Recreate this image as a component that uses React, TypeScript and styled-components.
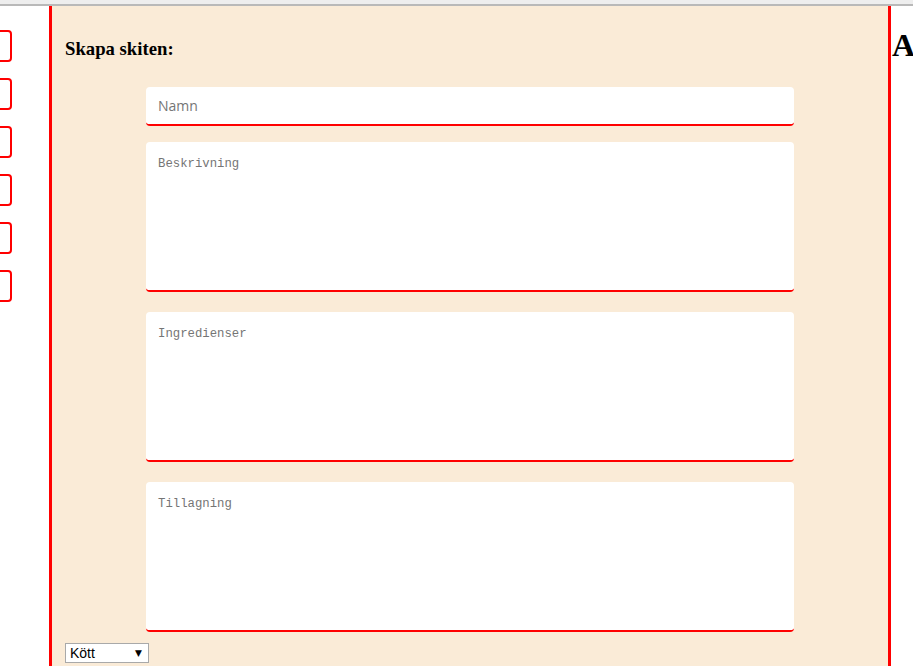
import styled, { createGlobalStyle } from 'styled-components';

const Global = createGlobalStyle`
  html, body {
    margin: 0;
    padding: 0;
    background: #fff;
    overflow: hidden;
  }
  body {
    font-family: "Liberation Serif", "Times New Roman", serif;
  }
`;

const TopStrip = styled.div`
  height: 4px;
  background: #eeeeee;
  border-bottom: 2px solid #b9b9b9;
`;

const Page = styled.div`
  display: flex;
  width: 913px;
  height: 660px;
  overflow: hidden;
`;

const Sidebar = styled.nav`
  flex: 0 0 49px;
  display: flex;
  flex-direction: column;
  gap: 16px;
  padding-top: 24px;
  overflow: hidden;
`;

const SideTile = styled.div`
  width: 58px;
  height: 28px;
  margin-left: -50px;
  border: 2px solid #ff0000;
  border-radius: 4px;
  background: #fff;
`;

const Panel = styled.main`
  flex: 0 0 842px;
  border-left: 3px solid #ff0000;
  border-right: 3px solid #ff0000;
  background: #faebd7;
  padding: 0 13px;
  box-sizing: border-box;
`;

const Title = styled.h3`
  margin: 32px 0 0;
  font-size: 18.72px;
  font-weight: bold;
  color: #000;
`;

const Form = styled.form`
  display: flex;
  flex-direction: column;
  margin-top: 27px;
`;

const Fields = styled.div`
  display: flex;
  flex-direction: column;
  align-items: center;
  gap: 20px;
`;

const fieldBase = `
  width: 648px;
  box-sizing: border-box;
  border: none;
  border-bottom: 2px solid #ff0000;
  border-radius: 4px;
  background: #fff;
  outline: none;
  margin: 0;
  &::placeholder {
    color: #757575;
    opacity: 1;
  }
`;

const NameInput = styled.input`
  ${fieldBase}
  height: 39px;
  padding: 0 12px;
  font-family: "Open Sans", "Liberation Sans", Arial, sans-serif;
  font-size: 14px;
  margin-bottom: -4px;
`;

const TextBox = styled.textarea`
  ${fieldBase}
  height: 150px;
  padding: 14px 12px 12px;
  resize: none;
  font-family: "Liberation Mono", "DejaVu Sans Mono", monospace;
  font-size: 12.3px;
  line-height: 16px;
`;

const SelectWrap = styled.div`
  position: relative;
  width: 84px;
  height: 20px;
  margin-top: 11px;
`;

const CategorySelect = styled.select`
  appearance: none;
  -webkit-appearance: none;
  width: 84px;
  height: 20px;
  box-sizing: border-box;
  border: 1px solid #a9a9a9;
  border-radius: 0;
  background: #fff;
  padding: 0 16px 0 4px;
  font-family: "Liberation Sans", Arial, sans-serif;
  font-size: 14px;
  color: #000;
  outline: none;
`;

const Caret = styled.span`
  position: absolute;
  right: 7px;
  top: 4px;
  font-size: 9px;
  line-height: 12px;
  color: #000;
  pointer-events: none;
  font-family: "DejaVu Sans", sans-serif;
`;

const Aside = styled.aside`
  flex: 1 1 auto;
  overflow: hidden;
  white-space: nowrap;
`;

const AsideTitle = styled.h1`
  margin: 21px 0 0 1px;
  font-size: 32px;
  font-weight: bold;
  color: #000;
`;

export default function App() {
  return (
    <>
      <Global />
      <TopStrip />
      <Page>
        <Sidebar>
          {[0, 1, 2, 3, 4, 5].map((i) => (
            <SideTile key={i} />
          ))}
        </Sidebar>
        <Panel>
          <Title>Skapa skiten:</Title>
          <Form onSubmit={(e) => e.preventDefault()}>
            <Fields>
              <NameInput placeholder="Namn" />
              <TextBox placeholder="Beskrivning" />
              <TextBox placeholder="Ingredienser" />
              <TextBox placeholder="Tillagning" />
            </Fields>
            <SelectWrap>
              <CategorySelect defaultValue="Kött">
                <option>Kött</option>
                <option>Fisk</option>
                <option>Vegetariskt</option>
              </CategorySelect>
              <Caret>▼</Caret>
            </SelectWrap>
          </Form>
        </Panel>
        <Aside>
          <AsideTitle>A</AsideTitle>
        </Aside>
      </Page>
    </>
  );
}
